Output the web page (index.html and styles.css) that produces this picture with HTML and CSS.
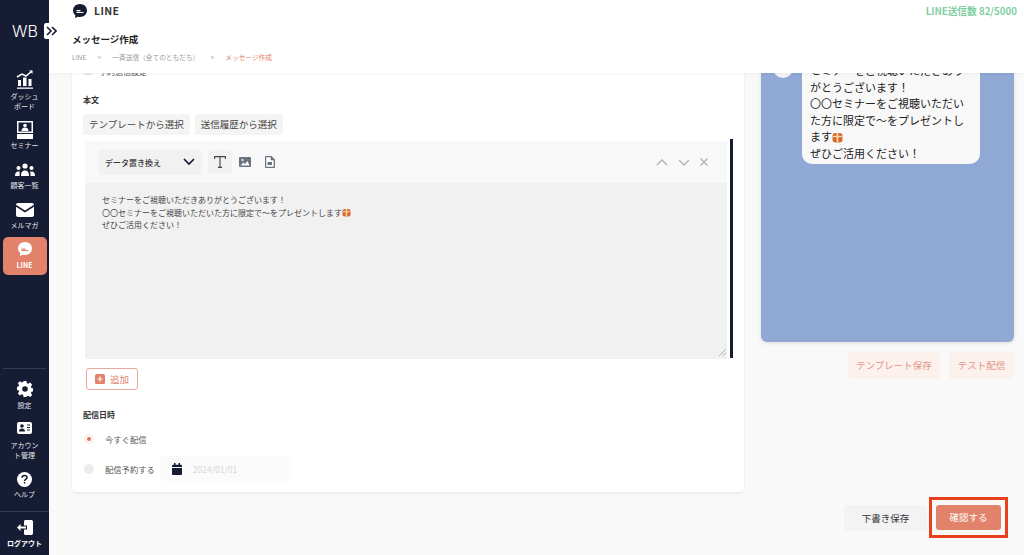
FILE: index.html
```html
<!DOCTYPE html>
<html lang="ja">
  <head>
    <meta charset="utf-8" />
    <title>メッセージ作成</title>
    <link rel="stylesheet" href="styles.css">
  </head>
  <body>
    <div class="sidebar">
      <div class="logo">WB</div>
      <div class="expand">
        <svg width="11" height="10" viewBox="0 0 11 10" fill="none" stroke="#171c35" stroke-width="1.6"><path d="M1 1l4 4-4 4M6 1l4 4-4 4"/></svg>
      </div>
      <div class="nav">
        <div class="nav-item nav-dash">
          <svg width="18" height="19" viewBox="0 0 18 19" fill="#fff"><path d="M1 7l5-3 4 2 6-5" fill="none" stroke="#fff" stroke-width="1.5"/><path d="M13 .5h3.500V4z"/><rect x="2" y="10" width="3" height="6"/><rect x="7" y="7.500" width="3.500" height="8.500"/><rect x="12.500" y="9" width="3" height="7"/><rect x="1" y="17.500" width="16" height="1.300"/></svg>
          <span>ダッシュ<br>ボード</span>
        </div>
        <div class="nav-item nav-seminar">
          <svg width="18" height="18" viewBox="0 0 18 18" fill="#fff"><path d="M1 0h16v12H1zM2.500 1.500v9h13v-9z" fill-rule="evenodd"/><circle cx="9" cy="4.500" r="1.800"/><path d="M5.500 10c0-2.500 1.500-3.500 3.500-3.500s3.500 1 3.500 3.500z"/><rect x="1" y="13" width="16" height="5"/></svg>
          <span>セミナー</span>
        </div>
        <div class="nav-item nav-customer">
          <svg width="20" height="14" viewBox="0 0 20 14" fill="#fff"><circle cx="10" cy="3" r="2.600"/><circle cx="3.500" cy="5" r="2"/><circle cx="16.500" cy="5" r="2"/><path d="M6 13c0-4 1.500-5.500 4-5.500s4 1.500 4 5.500zM0 13c0-3 1.200-4.500 3.500-4.500 .7 0 1 .1 1.300.3C4.600 10 4.500 11.500 4.500 13zM20 13c0-3-1.200-4.500-3.500-4.500-.7 0-1 .1-1.300.3.200 1.200.3 2.700.3 4.200z"/></svg>
          <span>顧客一覧</span>
        </div>
        <div class="nav-item nav-mail">
          <svg width="18" height="14" viewBox="0 0 18 14" fill="#fff"><path d="M2 0h14c1 0 2 .8 2 1.800L9 7.500 0 1.800C0 .8 1 0 2 0z"/><path d="M0 3.800l9 5.700 9-5.700V12c0 1-1 2-2 2H2c-1 0-2-1-2-2z"/></svg>
          <span>メルマガ</span>
        </div>
        <div class="nav-item nav-line">
          <svg width="14" height="14" viewBox="0 0 14 14"><path d="M7 0c3.900 0 7 2.800 7 6.500S10.900 13 7 13c-.8 0-1.500-.1-2.200-.3L2 14l.3-2.700C.9 10.100 0 8.400 0 6.500 0 2.800 3.100 0 7 0z" fill="#fff"/><rect x="3.500" y="6.500" width="4" height="1.300" fill="#e2826a"/><rect x="3.500" y="8" width="7" height="1" fill="#e2826a"/></svg>
          <span>LINE</span>
        </div>
      </div>
      <div class="nav-bottom">
        <div class="nav-item nav-setting">
          <svg width="16" height="16" viewBox="0 0 16 16" fill="#fff"><path fill-rule="evenodd" d="M6.500 0h3l.4 2.200 1.300.6L13.100 1.500l2.100 2.200-1.300 1.900.5 1.300 2.100.4v3l-2.100.4-.5 1.300 1.300 1.900-2.100 2.200-1.900-1.300-1.300.5L9.500 16h-3l-.4-2.200-1.300-.5-1.900 1.300L.8 12.400l1.300-1.900-.5-1.300L-.5 8.800v-3l2.100-.4.5-1.300L.8 2.200 2.900.2l1.900 1.300 1.300-.5zM8 5.200a2.800 2.800 0 100 5.600 2.800 2.800 0 000-5.600z"/></svg>
          <span>設定</span>
        </div>
        <div class="nav-item nav-account">
          <svg width="15" height="12" viewBox="0 0 15 12"><rect width="15" height="12" rx="2" fill="#fff"/><circle cx="5" cy="4" r="1.800" fill="#171c35"/><path d="M2 9.500C2 7.500 3.200 6.500 5 6.500s3 1 3 3z" fill="#171c35"/><path d="M10 3h3M10 5.500h3M10 8h3" stroke="#171c35"/></svg>
          <span>アカウン<br>ト管理</span>
        </div>
        <div class="nav-item nav-help">
          <svg width="15" height="15" viewBox="0 0 15 15"><circle cx="7.500" cy="7.500" r="7.500" fill="#fff"/><path d="M5 5.800c0-1.500 1.100-2.300 2.500-2.300s2.500.8 2.500 2.100c0 1.800-2.400 1.800-2.400 3.500" fill="none" stroke="#171c35" stroke-width="1.500"/><rect x="6.800" y="10" width="1.500" height="1.500" fill="#171c35"/></svg>
          <span>ヘルプ</span>
        </div>
        <div class="nav-item nav-logout">
          <svg width="16" height="15" viewBox="0 0 16 15" fill="#fff"><path d="M7 1.500C7 .7 7.700 0 8.500 0H14c1 0 2 .7 2 1.500v12c0 .8-1 1.500-2 1.500H8.500C7.700 15 7 14.300 7 13.500V9.500h3v-4H7z"/><path d="M0 7.500L3.500 4v2.500H9v2H3.500V11z"/></svg>
          <span>ログアウト</span>
        </div>
      </div>
    </div>

    <div class="main">
      <div class="header">
        <div class="header-top">
          <div class="page-name">
            <svg width="14" height="14" viewBox="0 0 14 14"><path d="M7 0c3.900 0 7 2.800 7 6.500S10.900 13 7 13c-.8 0-1.500-.1-2.200-.3L2 14l.3-2.700C.9 10.100 0 8.400 0 6.500 0 2.800 3.100 0 7 0z" fill="#171c35"/><rect x="3.500" y="6" width="4" height="1.300" fill="#fff"/><rect x="3.500" y="8" width="7" height="1" fill="#fff"/></svg>
            <span>LINE</span>
          </div>
          <div class="send-count">LINE送信数 82/5000</div>
        </div>
        <div class="title">メッセージ作成</div>
        <div class="breadcrumb">
          <span>LINE</span><span class="sep">&gt;</span><span>一斉送信（全てのともだち）</span><span class="sep">&gt;</span><span class="current">メッセージ作成</span>
        </div>
      </div>

      <div class="content">
        <div class="form-col">
          <div class="card">
            <div class="cut-row"><span class="radio"></span><span>予約送信設定</span></div>
            <div class="label label-body">本文</div>
            <div class="tpl-buttons">
              <div class="tpl-btn">テンプレートから選択</div>
              <div class="tpl-btn">送信履歴から選択</div>
            </div>
            <div class="editor-wrap">
              <div class="editor">
                <div class="toolbar">
                  <div class="data-select">
                    <span>データ置き換え</span>
                    <svg width="12" height="8" viewBox="0 0 12 8" fill="none" stroke="#171c35" stroke-width="1.700"><path d="M1 1l5 5 5-5"/></svg>
                  </div>
                  <div class="tool tool-on">
                    <svg width="12" height="12" viewBox="0 0 12 12" fill="none" stroke="#444" stroke-width="1.100"><path d="M.6 3V.6h10.800V3M6 .6v10.800M4 11.400h4"/></svg>
                  </div>
                  <div class="tool">
                    <svg width="12" height="10" viewBox="0 0 12 10"><rect width="12" height="10" rx="1" fill="#6b7280"/><circle cx="3.500" cy="3" r="1" fill="#fff"/><path d="M1.500 8.500l3-3 1.500 1.500 2.500-3 2 4.500z" fill="#fff"/></svg>
                  </div>
                  <div class="tool">
                    <svg width="10" height="12" viewBox="0 0 10 12"><path d="M1 0h5.500L10 3.500V11c0 .6-.4 1-1 1H1c-.6 0-1-.4-1-1V1c0-.6.4-1 1-1z" fill="#6b7280"/><path d="M1.200 1.200h4.500v3h3V10.800H1.200z" fill="#fff"/><rect x="2.500" y="6" width="4.500" height="3" fill="#6b7280"/></svg>
                  </div>
                  <div class="row-actions">
                    <svg width="12" height="7" viewBox="0 0 12 7" fill="none" stroke="#b5b8c0" stroke-width="1.500"><path d="M1 6l5-5 5 5"/></svg>
                    <svg width="12" height="7" viewBox="0 0 12 7" fill="none" stroke="#b5b8c0" stroke-width="1.500"><path d="M1 1l5 5 5-5"/></svg>
                    <svg width="8" height="8" viewBox="0 0 8 8" fill="none" stroke="#b5b8c0" stroke-width="1.500"><path d="M.5.5l7 7M7.500.5l-7 7"/></svg>
                  </div>
                </div>
                <div class="textarea">
                  セミナーをご視聴いただきありがとうございます！<br>
                  〇〇セミナーをご視聴いただいた方に限定で〜をプレゼントします<svg class="gift" viewBox="0 0 10 10"><rect x=".5" y="1" width="9" height="8.500" rx="2.500" fill="#d9692d"/><rect x="4.200" y="1" width="1.600" height="8.500" fill="#f3d9a8"/><rect x="1" y="3.500" width="8" height="1.200" fill="#f3d9a8"/></svg><br>
                  ぜひご活用ください！
                  <svg class="grip" width="7" height="7" viewBox="0 0 7 7" fill="none" stroke="#999" stroke-width=".7"><path d="M7 0L0 7M7 3.500L3.500 7"/></svg>
                </div>
              </div>
              <div class="scroll-thumb"></div>
            </div>
            <div class="add-btn">
              <svg width="10" height="10" viewBox="0 0 10 10"><rect width="10" height="10" rx="1.500" fill="#e2826a"/><path d="M5 2.500v5M2.500 5h5" stroke="#fff" stroke-width="1.200"/></svg>
              <span>追加</span>
            </div>
            <div class="label label-date">配信日時</div>
            <div class="radio-row row-now">
              <span class="radio radio-on"></span>
              <span>今すぐ配信</span>
            </div>
            <div class="radio-row row-later">
              <span class="radio"></span>
              <span>配信予約する</span>
              <div class="date-box">
                <svg width="10" height="12" viewBox="0 0 10 12" fill="#171c35"><path d="M0 3c0-.8.5-1.300 1.200-1.300H2V0h1.500v1.700h3V0H8v1.700h.8C9.500 1.700 10 2.200 10 3v1H0zM0 5h10v6c0 .6-.4 1-1 1H1c-.6 0-1-.4-1-1z"/></svg>
                <span>2024/01/01</span>
              </div>
            </div>
          </div>
        </div>

        <div class="preview-col">
          <div class="phone">
            <div class="avatar"></div>
            <div class="bubble">
              セミナーをご視聴いただきありがとうございます！<br>
              〇〇セミナーをご視聴いただいた方に限定で〜をプレゼントします<svg class="gift gift-big" viewBox="0 0 10 10"><rect x=".5" y="1" width="9" height="8.500" rx="2.500" fill="#d9692d"/><rect x="4.200" y="1" width="1.600" height="8.500" fill="#f3d9a8"/><rect x="1" y="3.500" width="8" height="1.200" fill="#f3d9a8"/></svg><br>
              ぜひご活用ください！
            </div>
          </div>
          <div class="preview-buttons">
            <div class="soft-btn btn-template">テンプレート保存</div>
            <div class="soft-btn btn-test">テスト配信</div>
          </div>
          <div class="submit-row">
            <div class="draft-btn">下書き保存</div>
            <div class="confirm-wrap">
              <div class="confirm-btn">確認する</div>
            </div>
          </div>
        </div>
      </div>
    </div>
  </body>
</html>
```

FILE: styles.css
```css
* {
  box-sizing: border-box;
}

html,
body {
  height: 100%;
}

body {
  margin: 0;
  display: flex;
  overflow: hidden;
  background-color: #f9f9f9;
  color: #333;
  font-family: "Noto Sans CJK JP", "Noto Sans", sans-serif;
}

/* sidebar */
.sidebar {
  position: relative;
  z-index: 3;
  width: 49px;
  flex-shrink: 0;
  display: flex;
  flex-direction: column;
  background-color: #171c35;
  color: #fff;
}

.logo {
  margin: 19px 0 0 12px;
  height: 24px;
  font-family: "Inter", sans-serif;
  font-size: 16px;
  line-height: 24px;
  font-weight: 300;
}

.expand {
  position: absolute;
  top: 23px;
  left: 44px;
  width: 15px;
  height: 16px;
  display: flex;
  align-items: center;
  justify-content: center;
  background-color: #fff;
  border-radius: 2px;
}

.nav {
  margin-top: 27px;
  display: flex;
  flex-direction: column;
  align-items: center;
}

.nav-item {
  display: flex;
  flex-direction: column;
  align-items: center;
  text-align: center;
  font-size: 7px;
  line-height: 10px;
  color: #e6e7ea;
}

.nav-item span {
  margin-top: 3px;
}

.nav-dash span {
  margin-top: 2px;
}

.nav-seminar {
  margin-top: 10px;
}

.nav-seminar span {
  margin-top: 1px;
}

.nav-customer {
  margin-top: 13px;
}

.nav-mail {
  margin-top: 13px;
}

.nav-line {
  width: 44px;
  height: 38px;
  margin-top: 7px;
  padding-top: 5px;
  background-color: #e2826a;
  border-radius: 5px;
  font-weight: 700;
  color: #fff;
}

.nav-line span {
  margin-top: 4px;
}

.nav-bottom {
  margin-top: auto;
  display: flex;
  flex-direction: column;
  align-items: center;
  border-top: 1px solid #343950;
  margin-left: 3px;
  margin-right: 3px;
  padding-top: 12px;
}

.nav-account {
  margin-top: 12px;
}

.nav-account span {
  margin-top: 6px;
}

.nav-help {
  margin-top: 12px;
  padding-bottom: 12px;
}

.nav-help span {
  margin-top: 2px;
}

.nav-logout {
  width: 49px;
  margin: 0 -3px;
  padding: 8px 0 7px;
  border-top: 1px solid #343950;
  font-weight: 700;
  color: #fff;
}

/* header */
.main {
  flex: 1;
  min-width: 0;
  display: flex;
  flex-direction: column;
}

.header {
  position: relative;
  z-index: 2;
  height: 73px;
  flex-shrink: 0;
  padding: 4px 7px 0 23px;
  background-color: #fff;
  box-shadow: 0 1px 3px rgba(0, 0, 0, 0.05);
}

.header-top {
  display: flex;
  justify-content: space-between;
  height: 16px;
}

.page-name {
  display: flex;
  align-items: flex-start;
  gap: 7px;
  margin-left: 1px;
  font-size: 10.5px;
  line-height: 14px;
  font-weight: 700;
  letter-spacing: 0.4px;
  color: #333;
}

.send-count {
  font-size: 9.7px;
  line-height: 14px;
  font-weight: 700;
  color: #7fce9f;
}

.title {
  margin-top: 12px;
  font-size: 9.5px;
  line-height: 15px;
  font-weight: 700;
  color: #222;
}

.breadcrumb {
  margin-top: 5px;
  display: flex;
  font-size: 6.7px;
  line-height: 10px;
  color: #9a9a9a;
}

.breadcrumb .sep {
  width: 26px;
  text-align: center;
}

.breadcrumb .current {
  color: #e2826a;
}

/* content */
.content {
  flex: 1;
  min-height: 0;
  display: flex;
  overflow: hidden;
}

.form-col {
  width: 672px;
  margin-left: 23px;
  flex-shrink: 0;
}

.card {
  height: 427px;
  margin-top: -8px;
  padding: 0 11px;
  background-color: #fff;
  border-radius: 4px;
  box-shadow: 0 1px 3px rgba(0, 0, 0, 0.08);
}

.cut-row {
  height: 12px;
  display: flex;
  align-items: center;
  gap: 6px;
  font-size: 8px;
  color: #555;
}

.label {
  font-size: 8px;
  line-height: 12px;
  font-weight: 700;
  color: #333;
}

.label-body {
  margin-top: 17px;
}

.tpl-buttons {
  display: flex;
  gap: 5px;
  margin-top: 8px;
}

.tpl-btn {
  height: 21px;
  padding: 0 6px;
  background-color: #f4f4f4;
  border-radius: 3px;
  font-size: 9.5px;
  line-height: 21px;
  color: #444;
}

.editor-wrap {
  display: flex;
  margin: 4px 0 0 2px;
}

.editor {
  width: 642px;
  height: 218px;
  margin-top: 2px;
  background-color: #f8f8f8;
}

.scroll-thumb {
  width: 3px;
  height: 219px;
  margin-left: 3px;
  background-color: #171c35;
}

.toolbar {
  height: 42px;
  display: flex;
  align-items: center;
  padding: 0 19px 0 14px;
}

.data-select {
  width: 103px;
  height: 25px;
  display: flex;
  align-items: center;
  justify-content: space-between;
  padding: 0 7px 0 6px;
  margin-right: 6px;
  background-color: #f1f1f1;
  border-radius: 3px;
  font-size: 8px;
  font-weight: 500;
  color: #333;
}

.tool {
  width: 24px;
  height: 24px;
  margin-right: 1px;
  display: flex;
  align-items: center;
  justify-content: center;
  border-radius: 3px;
}

.tool-on {
  background-color: #f1f1f1;
}

.row-actions {
  margin-left: auto;
  display: flex;
  align-items: center;
  gap: 10px;
}

.textarea {
  position: relative;
  height: 176px;
  padding: 11px 17px;
  background-color: #f1f1f1;
  font-size: 8px;
  line-height: 12.5px;
  color: #444;
}

.gift {
  width: 9px;
  height: 9px;
  vertical-align: -1.5px;
}

.gift-big {
  width: 11px;
  height: 11px;
  vertical-align: -2px;
}

.grip {
  position: absolute;
  right: 1px;
  bottom: 3px;
}

.add-btn {
  width: 52px;
  height: 22px;
  margin: 9px 0 0 3px;
  display: flex;
  align-items: center;
  justify-content: center;
  gap: 5px;
  background-color: #fff;
  border: 1px solid #eba999;
  border-radius: 3px;
  font-size: 9.5px;
  color: #e2826a;
}

.label-date {
  margin-top: 19px;
}

.radio-row {
  display: flex;
  align-items: center;
  margin-left: 1px;
  font-size: 8.3px;
  color: #555;
}

.radio {
  display: inline-block;
  flex-shrink: 0;
  width: 10px;
  height: 10px;
  background-color: #ececec;
  border-radius: 50%;
}

.radio-row .radio {
  margin-right: 11px;
}

.radio-on {
  background-color: #fff;
  border: 2px solid #fbeee9;
  padding: 1px;
  background-clip: padding-box;
}

.radio-on::after {
  content: "";
  display: block;
  width: 4px;
  height: 4px;
  background-color: #e2725b;
  border-radius: 50%;
}

.row-now {
  margin-top: 12px;
  height: 12px;
}

.row-later {
  margin-top: 11px;
  height: 25px;
}

.date-box {
  width: 132px;
  height: 25px;
  margin-left: 5px;
  display: flex;
  align-items: center;
  gap: 11px;
  padding-left: 12px;
  background-color: #fbfbfb;
  border-radius: 3px;
  font-size: 8.5px;
  color: #d8d8d8;
}

/* preview */
.preview-col {
  width: 253px;
  margin-left: 17px;
  flex-shrink: 0;
  display: flex;
  flex-direction: column;
}

.phone {
  height: 269px;
  display: flex;
  align-items: flex-start;
  gap: 9px;
  padding: 0 34px 0 12px;
  background-color: #8fa8d4;
  border-radius: 0 0 6px 6px;
  box-shadow: 0 1px 4px rgba(0, 0, 0, 0.12);
}

.avatar {
  width: 20px;
  height: 20px;
  margin-top: -15px;
  flex-shrink: 0;
  background-color: #f3f4f6;
  border-radius: 50%;
}

.bubble {
  width: 178px;
  margin-top: -11px;
  padding: 0 12px 3px 8px;
  background-color: #f8f8f8;
  border-radius: 0 0 10px 10px;
  font-size: 11px;
  line-height: 16.5px;
  color: #222;
}

.preview-buttons {
  display: flex;
  justify-content: flex-end;
  gap: 9px;
  margin-top: 10px;
}

.soft-btn {
  height: 27px;
  background-color: #fdf1ed;
  border-radius: 3px;
  text-align: center;
  font-size: 9.5px;
  line-height: 27px;
  color: #e2968a;
}

.btn-template {
  width: 92px;
}

.btn-test {
  width: 65px;
}

.submit-row {
  display: flex;
  align-items: center;
  margin: 118px 0 0 83px;
}

.draft-btn {
  width: 83px;
  height: 26px;
  flex-shrink: 0;
  background-color: #f3f3f3;
  border-radius: 3px;
  text-align: center;
  font-size: 9.5px;
  line-height: 26px;
  color: #333;
}

.confirm-wrap {
  width: 79px;
  height: 41px;
  margin-left: 2px;
  flex-shrink: 0;
  padding: 5px 4px;
  border: 3px solid #e8401c;
}

.confirm-btn {
  height: 25px;
  background-color: #e2826a;
  border-radius: 3px;
  text-align: center;
  font-size: 9.5px;
  line-height: 25px;
  color: #fff;
}
```
